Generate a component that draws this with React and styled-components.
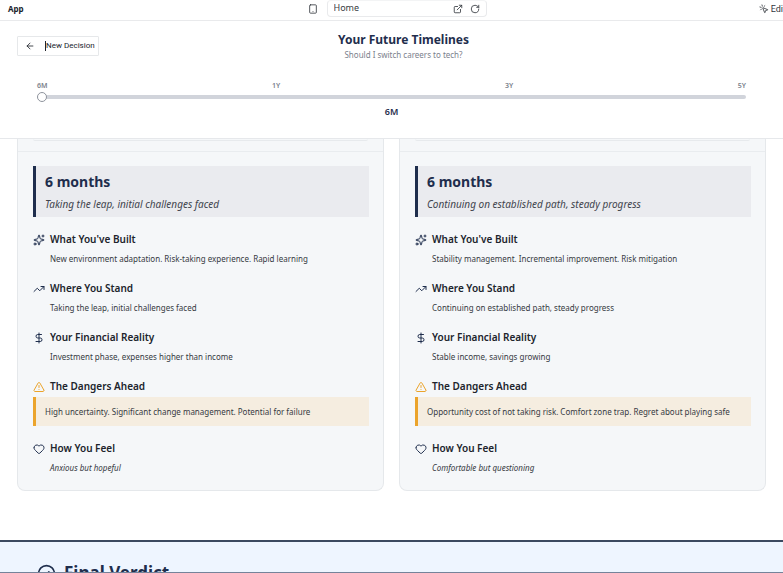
import React, { useState } from "react";
import styled, { createGlobalStyle } from "styled-components";
import {
  ArrowLeft,
  CircleCheck,
  DollarSign,
  ExternalLink,
  Heart,
  MousePointerClick,
  RotateCw,
  Sparkles,
  Tablet,
  TrendingUp,
  TriangleAlert,
} from "lucide-react";

const navy = "#1f2e4d";
const amber = "#eba42c";

const Global = createGlobalStyle`
  *, *::before, *::after { box-sizing: border-box; }
  body {
    margin: 0;
    background: #fff;
    color: #20242c;
    font-family: "Noto Sans", "Open Sans", sans-serif;
  }
  h1, h2, h3, p { margin: 0; }
`;

const Page = styled.div`
  height: 100vh;
  overflow: hidden;
  display: flex;
  flex-direction: column;
`;

const TopBar = styled.div`
  flex: none;
  display: grid;
  grid-template-columns: 1fr auto 1fr;
  align-items: center;
  width: calc(100% + 3px);
  height: 21px;
  padding: 0 0 4px 8px;
  border-bottom: 1px solid #e9eaec;
`;

const AppName = styled.span`
  font-weight: 700;
  font-size: 8px;
`;

const PreviewTools = styled.div`
  display: flex;
  align-items: center;
  gap: 9px;
`;

const IconButton = styled.button`
  display: flex;
  flex: none;
  padding: 0;
  border: 0;
  background: none;
  color: #33373d;
`;

const AddressBar = styled.div`
  display: flex;
  align-items: center;
  gap: 7px;
  width: 160px;
  height: 17px;
  padding: 0 6px;
  border: 1px solid #e9eaec;
  border-top-color: #f3f4f5;
  border-radius: 4px;
`;

const AddressInput = styled.input`
  flex: 1;
  min-width: 0;
  padding: 0 0 2px;
  border: 0;
  outline: 0;
  background: none;
  color: #383c42;
  font: inherit;
  font-size: 9px;
`;

const EditButton = styled(IconButton)`
  justify-self: end;
  align-items: center;
  gap: 2px;
  font: inherit;
  font-family: Roboto, "Noto Sans", sans-serif;
  font-size: 9px;
`;

const Header = styled.header`
  flex: none;
  height: 118px;
  padding: 10px 17px 0;
  border-bottom: 1px solid #e6e8eb;
`;

const TitleRow = styled.div`
  display: grid;
  grid-template-columns: auto 1fr 58px;
  align-items: center;
`;

const BackButton = styled.button`
  display: flex;
  align-items: center;
  gap: 10px;
  width: 82px;
  height: 20px;
  padding: 0 7px;
  border: 1px solid #e6e8ea;
  border-radius: 1px;
  background: #fff;
  color: #20242c;
  font: inherit;
  font-family: Roboto, "Noto Sans", sans-serif;
  font-size: 8px;
  white-space: nowrap;

  svg {
    flex: none;
  }
`;

const BackLabel = styled.span`
  border-left: 1px solid #20242c;
  line-height: 10px;
`;

const Titles = styled.div`
  text-align: center;
`;

const Title = styled.h1`
  color: ${navy};
  font-size: 12px;
  line-height: 18px;
  font-weight: 700;
`;

const Question = styled.p`
  color: #7b818c;
  font-size: 8px;
  line-height: 12px;
`;

const Timeline = styled.div`
  display: flex;
  flex-direction: column;
  padding: 19px 20px 0;
`;

const Ticks = styled.div`
  display: flex;
  justify-content: space-between;
  color: #7b818c;
  font-size: 7px;
  line-height: 12px;
  font-weight: 600;
`;

const Slider = styled.input`
  appearance: none;
  width: 100%;
  height: 10px;
  margin: 0;
  background: none;
  outline: 0;

  &::-webkit-slider-runnable-track {
    height: 4px;
    border-radius: 2px;
    background: #d1d4db;
  }
  &::-webkit-slider-thumb {
    appearance: none;
    width: 10px;
    height: 10px;
    margin-top: -3px;
    border: 1px solid #8f949d;
    border-radius: 50%;
    background: #fff;
  }
`;

const SliderValue = styled.output`
  padding-top: 2px;
  color: ${navy};
  font-size: 9px;
  line-height: 16px;
  font-weight: 600;
  text-align: center;
`;

const Paths = styled.main`
  flex: none;
  display: grid;
  grid-template-columns: 1fr 1fr;
  gap: 15px;
  padding: 0 17px 49px;
`;

const Card = styled.article`
  border: 1px solid #e5e8eb;
  border-top: 0;
  border-radius: 0 0 8px 8px;
  background: #f5f7f9;
`;

const CardHead = styled.div`
  height: 13px;
  padding: 0 15px;
  border-bottom: 1px solid #e9ecef;
`;

const CardHeadBox = styled.div`
  height: 2px;
  border-bottom: 1px solid #e7eaed;
  border-radius: 0 0 2px 2px;
`;

const CardBody = styled.div`
  display: flex;
  flex-direction: column;
  gap: 15px;
  padding: 14px 14px 15px 15px;
`;

const Summary = styled.div`
  padding: 7px 9px 5px;
  border-left: 3px solid ${navy};
  background: #eaebef;
`;

const Period = styled.h2`
  color: ${navy};
  font-size: 14px;
  line-height: 18px;
  font-weight: 700;
`;

const SummaryText = styled.p`
  padding-top: 5px;
  color: #3f444d;
  font-size: 10px;
  line-height: 16px;
  font-style: italic;
`;

const Section = styled.section`
  display: flex;
  flex-direction: column;
  gap: ${(p) => (p.$warn ? 3 : 4)}px;
`;

const SectionTitle = styled.h3`
  display: flex;
  align-items: center;
  gap: 5px;
  font-size: 10px;
  line-height: 15px;
  font-weight: 600;

  svg {
    flex: none;
    color: ${(p) => (p.$warn ? amber : navy)};
  }
`;

const SectionText = styled.p`
  padding-left: 17px;
  color: #363a42;
  font-size: 8px;
  line-height: 15px;
  font-style: ${(p) => (p.$italic ? "italic" : "normal")};
`;

const Warning = styled.p`
  padding: 7px 9px;
  border-left: 3px solid ${amber};
  background: #f5ede0;
  color: #363a42;
  font-size: 8px;
  line-height: 15px;
`;

const Verdict = styled.section`
  flex: 1;
  min-height: 0;
  overflow: hidden;
  padding: 19px 37px 0;
  border-top: 2px solid #3b4960;
  border-bottom: 1px solid #75839a;
  background: #eef5ff;
`;

const VerdictTitle = styled.h2`
  display: flex;
  align-items: center;
  gap: 8px;
  color: ${navy};
  font-size: 17px;
  line-height: 24px;
  font-weight: 700;
`;

const paths = [
  {
    summary: "Taking the leap, initial challenges faced",
    built: "New environment adaptation. Risk-taking experience. Rapid learning",
    money: "Investment phase, expenses higher than income",
    danger: "High uncertainty. Significant change management. Potential for failure",
    feel: "Anxious but hopeful",
  },
  {
    summary: "Continuing on established path, steady progress",
    built: "Stability management. Incremental improvement. Risk mitigation",
    money: "Stable income, savings growing",
    danger: "Opportunity cost of not taking risk. Comfort zone trap. Regret about playing safe",
    feel: "Comfortable but questioning",
  },
];

const stages = ["6M", "1Y", "3Y", "5Y"];

function Topic({ icon: Icon, title, warn, italic, children }) {
  return (
    <Section $warn={warn}>
      <SectionTitle $warn={warn}>
        <Icon size={12} />
        {title}
      </SectionTitle>
      {warn ? <Warning>{children}</Warning> : <SectionText $italic={italic}>{children}</SectionText>}
    </Section>
  );
}

function PathCard({ path }) {
  return (
    <Card>
      <CardHead>
        <CardHeadBox />
      </CardHead>
      <CardBody>
        <Summary>
          <Period>6 months</Period>
          <SummaryText>{path.summary}</SummaryText>
        </Summary>
        <Topic icon={Sparkles} title="What You've Built">{path.built}</Topic>
        <Topic icon={TrendingUp} title="Where You Stand">{path.summary}</Topic>
        <Topic icon={DollarSign} title="Your Financial Reality">{path.money}</Topic>
        <Topic icon={TriangleAlert} title="The Dangers Ahead" warn>{path.danger}</Topic>
        <Topic icon={Heart} title="How You Feel" italic>{path.feel}</Topic>
      </CardBody>
    </Card>
  );
}

export default function App() {
  const [stage, setStage] = useState(0);
  return (
    <Page>
      <Global />
      <TopBar>
        <AppName>App</AppName>
        <PreviewTools>
          <IconButton aria-label="Device">
            <Tablet size={10} />
          </IconButton>
          <AddressBar>
            <AddressInput aria-label="Page" defaultValue="Home" />
            <IconButton aria-label="Open in new tab">
              <ExternalLink size={10} />
            </IconButton>
            <IconButton aria-label="Reload">
              <RotateCw size={10} />
            </IconButton>
          </AddressBar>
        </PreviewTools>
        <EditButton>
          <MousePointerClick size={10} />
          Edit
        </EditButton>
      </TopBar>
      <Header>
        <TitleRow>
          <BackButton>
            <ArrowLeft size={10} />
            <BackLabel>New Decision</BackLabel>
          </BackButton>
          <Titles>
            <Title>Your Future Timelines</Title>
            <Question>Should I switch careers to tech?</Question>
          </Titles>
        </TitleRow>
        <Timeline>
          <Ticks>
            {stages.map((s) => (
              <span key={s}>{s}</span>
            ))}
          </Ticks>
          <Slider
            type="range"
            aria-label="Timeline"
            min={0}
            max={3}
            value={stage}
            onChange={(e) => setStage(Number(e.target.value))}
          />
          <SliderValue>{stages[stage]}</SliderValue>
        </Timeline>
      </Header>
      <Paths>
        {paths.map((p) => (
          <PathCard key={p.feel} path={p} />
        ))}
      </Paths>
      <Verdict>
        <VerdictTitle>
          <CircleCheck size={19} />
          Final Verdict
        </VerdictTitle>
      </Verdict>
    </Page>
  );
}
